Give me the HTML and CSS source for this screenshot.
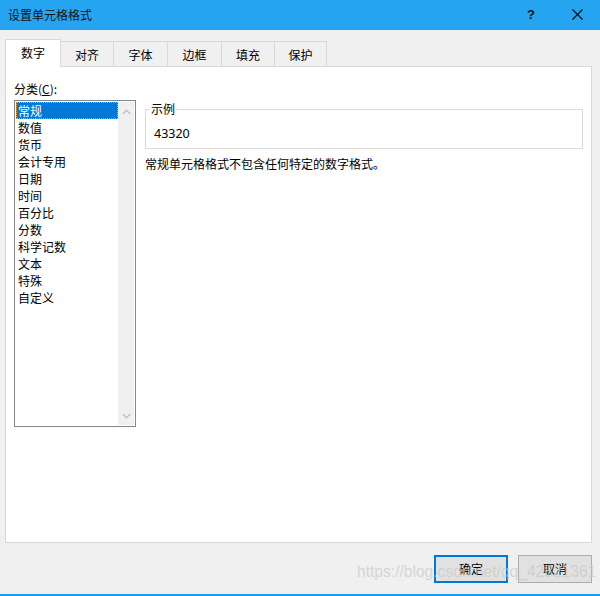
FILE: index.html
```html
<!DOCTYPE html>
<html lang="zh-CN">
<head>
<meta charset="utf-8">
<title>设置单元格格式</title>
<link rel="stylesheet" href="styles.css">
</head>
<body>
<div class="window">
  <div class="titlebar">
    <span class="title">设置单元格格式</span>
    <span class="help">?</span>
    <span class="close"><svg width="11" height="11" viewBox="0 0 11 11"><path d="M0.5 0.5 L10.5 10.5 M10.5 0.5 L0.5 10.5" stroke="#000" stroke-width="1.1" fill="none"/></svg></span>
  </div>
  <div class="content">
    <div class="tabs">
      <div class="tab active t1">数字</div>
      <div class="tab t2">对齐</div>
      <div class="tab t3">字体</div>
      <div class="tab t4">边框</div>
      <div class="tab t5">填充</div>
      <div class="tab t6">保护</div>
    </div>
    <div class="panel">
      <div class="left">
        <div class="label">分类(<u>C</u>):</div>
        <div class="listbox">
          <ul class="items">
            <li class="item selected">常规</li>
            <li class="item">数值</li>
            <li class="item">货币</li>
            <li class="item">会计专用</li>
            <li class="item">日期</li>
            <li class="item">时间</li>
            <li class="item">百分比</li>
            <li class="item">分数</li>
            <li class="item">科学记数</li>
            <li class="item">文本</li>
            <li class="item">特殊</li>
            <li class="item">自定义</li>
          </ul>
          <div class="scrollbar">
            <svg class="arrow" width="9" height="6" viewBox="0 0 9 6"><path d="M0.8 5 L4.5 1.3 L8.2 5" stroke="#c2c2c2" stroke-width="1.4" fill="none"/></svg>
            <svg class="arrow" width="9" height="6" viewBox="0 0 9 6"><path d="M0.8 1 L4.5 4.7 L8.2 1" stroke="#c2c2c2" stroke-width="1.4" fill="none"/></svg>
          </div>
        </div>
      </div>
      <div class="right">
        <fieldset class="sample">
          <legend>示例</legend>
          <div class="value">43320</div>
        </fieldset>
        <div class="desc">常规单元格格式不包含任何特定的数字格式。</div>
      </div>
    </div>
    <div class="buttons">
      <div class="btn default">确定</div>
      <div class="btn">取消</div>
    </div>
  </div>
  <div class="watermark">https://blog.csdn.net/qq_42821361</div>
</div>
</body>
</html>
```
FILE: styles.css
```css
* { box-sizing: border-box; }
html, body { margin: 0; padding: 0; }
body {
  font-family: "Noto Sans CJK SC", "Microsoft YaHei", sans-serif;
  font-size: 12px;
  color: #000;
  background: #f0f0f0;
}
.window {
  position: relative;
  width: 600px;
  height: 596px;
  background: #f0f0f0;
  border-bottom: 2px solid #1b9bf0;
  overflow: hidden;
}
.titlebar {
  height: 30px;
  background: #25a4ef;
  display: flex;
  align-items: center;
  padding-left: 8px;
}
.title { flex: 1; line-height: 16px; color: #111; }
.help {
  width: 10px;
  margin-right: 35px;
  font-family: "Liberation Sans", sans-serif;
  font-weight: bold;
  font-size: 13px;
  line-height: 16px;
  color: #111;
}
.close { width: 11px; height: 11px; margin-right: 17px; display: flex; margin-top: -1px; }
.content { padding: 9px 8px 0 5px; }
.tabs { display: flex; align-items: flex-end; height: 27px; position: relative; z-index: 2; }
.tab {
  height: 25px;
  border-top: 1px solid #d9d9d9;
  border-right: 1px solid #d9d9d9;
  display: flex;
  align-items: center;
  justify-content: center;
  line-height: 16px;
  padding-top: 1px;
}
.tab.active {
  height: 28px;
  margin-bottom: -1px;
  background: #fff;
  border-left: 1px solid #d9d9d9;
  padding-top: 0;
  padding-bottom: 2px;
}
.t1 { width: 56px; }
.t2 { width: 53px; }
.t3 { width: 54px; }
.t4 { width: 54px; }
.t5 { width: 53px; }
.t6 { width: 52px; }
.panel {
  width: 587px;
  height: 477px;
  background: #fff;
  border: 1px solid #d9d9d9;
  display: flex;
  padding: 14px 8px 0 8px;
  gap: 9px;
}
.left { width: 122px; }
.label { line-height: 16px; height: 16px; }
.label u { text-decoration: underline; text-underline-offset: 1px; }
.listbox {
  margin-top: 3px;
  width: 122px;
  height: 327px;
  border: 1px solid #828790;
  padding: 1px;
  display: flex;
  background: #fff;
}
.items { list-style: none; margin: 0; padding: 0; width: 102px; }
.item { height: 17px; line-height: 17px; padding-left: 2px; }
.item.selected {
  background: #0078d7;
  color: #fff;
  border: 1px dotted #f59f3f;
  line-height: 15px;
  padding-left: 1px;
}
.scrollbar {
  width: 16px;
  background: #f0f0f0;
  display: flex;
  flex-direction: column;
  justify-content: space-between;
  align-items: center;
  padding: 7px 0 6px;
}
.arrow { display: block; }
.right { width: 438px; }
.sample {
  margin: 20px 0 0 0;
  padding: 9px 8px 6px 8px;
  border: 1px solid #dcdcdc;
  min-width: 0;
}
.sample legend { padding: 0 1px; margin-left: -4px; line-height: 16px; font-size: 12px; }
.value { line-height: 16px; height: 16px; font-family: "Noto Sans", "Noto Sans CJK SC", sans-serif; font-size: 12.5px; }
.desc { margin-top: 7px; line-height: 16px; }
.buttons {
  display: flex;
  justify-content: flex-end;
  gap: 10px;
  margin-top: 12px;
  padding-right: 0;
}
.btn {
  width: 74px;
  height: 28px;
  background: #e1e1e1;
  border: 1px solid #adadad;
  display: flex;
  align-items: center;
  justify-content: center;
  line-height: 16px;
}
.btn.default { border: 2px solid #0078d7; }
.watermark {
  position: absolute;
  left: 357px;
  top: 563px;
  font-family: "Liberation Sans", Arial, sans-serif;
  font-size: 15.6px;
  line-height: 18px;
  color: rgba(200, 200, 200, 0.7);
  white-space: nowrap;
  pointer-events: none;
}
```
